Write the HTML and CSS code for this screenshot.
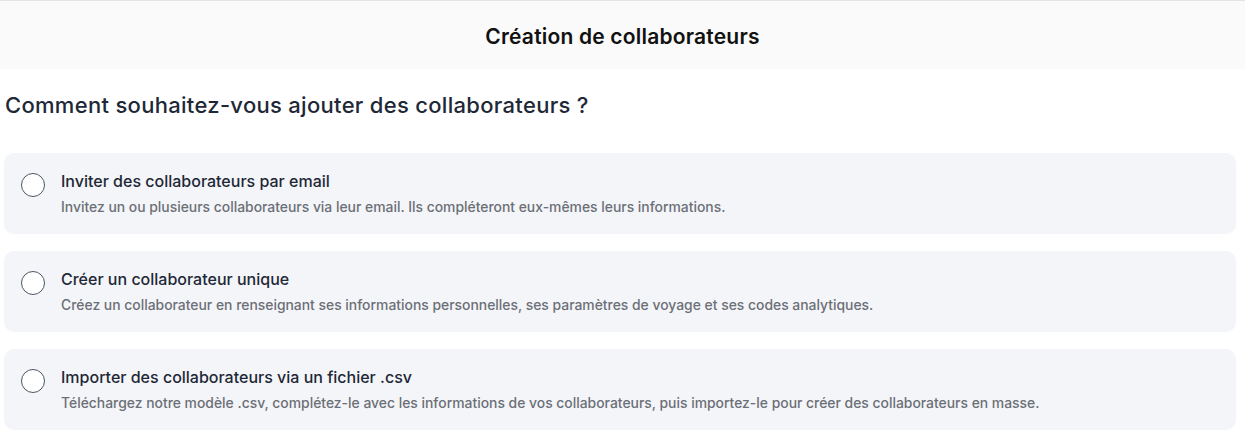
FILE: index.html
```html
<!DOCTYPE html>
<html lang="fr">
<head>
    <meta charset="UTF-8">
    <meta name="viewport" content="width=device-width, initial-scale=1.0">
    <title>Création de collaborateurs</title>
    <link rel="stylesheet" href="styles.css">
</head>
<body>

    <header class="topbar">
        <h1>Création de collaborateurs</h1>
    </header>

    <main class="content">
        <h2 class="question">Comment souhaitez-vous ajouter des collaborateurs ?</h2>

        <div class="options">
            <label class="option">
                <input type="radio" name="mode" value="email">
                <span class="radio"></span>
                <span class="option-text">
                    <span class="option-title">Inviter des collaborateurs par email</span>
                    <span class="option-desc">Invitez un ou plusieurs collaborateurs via leur email. Ils compléteront eux-mêmes leurs informations.</span>
                </span>
            </label>

            <label class="option">
                <input type="radio" name="mode" value="single">
                <span class="radio"></span>
                <span class="option-text">
                    <span class="option-title">Créer un collaborateur unique</span>
                    <span class="option-desc">Créez un collaborateur en renseignant ses informations personnelles, ses paramètres de voyage et ses codes analytiques.</span>
                </span>
            </label>

            <label class="option">
                <input type="radio" name="mode" value="csv">
                <span class="radio"></span>
                <span class="option-text">
                    <span class="option-title">Importer des collaborateurs via un fichier .csv</span>
                    <span class="option-desc">Téléchargez notre modèle .csv, complétez-le avec les informations de vos collaborateurs, puis importez-le pour créer des collaborateurs en masse.</span>
                </span>
            </label>
        </div>
    </main>

</body>
</html>
```

FILE: styles.css
```css
* { margin: 0; padding: 0; box-sizing: border-box; }

body {
    font-family: Inter, "Noto Sans", Arial, sans-serif;
    background: #fff;
    color: #1f2937;
}

.topbar {
    height: 69px;
    background: #fafafa;
    border-top: 1px solid #e4e4e4;
    display: flex;
    align-items: center;
    justify-content: center;
}

.topbar h1 {
    font-size: 21px;
    font-weight: 600;
    color: #111;
    letter-spacing: 0.2px;
    margin-top: 2px;
}

.content {
    padding: 0 9px 0 4px;
}

.question {
    font-size: 22px;
    font-weight: 500;
    color: #1e2836;
    margin: 22px 0 0 1px;
    line-height: 28px;
    letter-spacing: 0.3px;
}

.options {
    margin-top: 34px;
    display: flex;
    flex-direction: column;
    gap: 17px;
}

.option {
    display: flex;
    align-items: flex-start;
    gap: 16px;
    background: #f4f5f9;
    border-radius: 10px;
    padding: 18px 17px 17px;
    height: 81px;
    cursor: pointer;
}

.option input {
    display: none;
}

.radio {
    flex: none;
    width: 24px;
    height: 24px;
    margin-top: 2px;
    border: 1px solid #4b5563;
    border-radius: 50%;
    background: #fff;
}

.option input:checked + .radio {
    border: 7px solid #1e2836;
}

.option-text {
    display: flex;
    flex-direction: column;
    gap: 7px;
}

.option-title {
    font-size: 16px;
    font-weight: 500;
    color: #1e2836;
    line-height: 20px;
}

.option-desc {
    font-size: 13.9px;
    font-weight: 500;
    color: #6b6f76;
    line-height: 18px;
}
```
